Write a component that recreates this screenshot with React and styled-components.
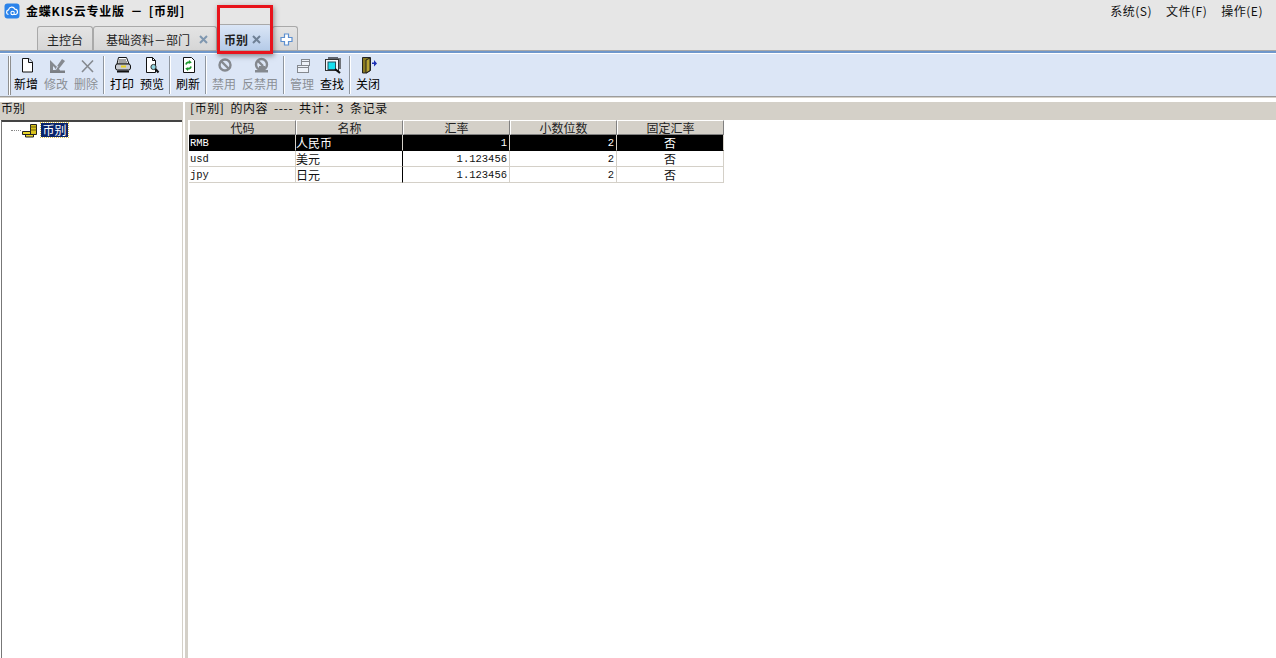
import React from 'react';
import styled, { createGlobalStyle } from 'styled-components';

const Global = createGlobalStyle`
    html, body {
        margin: 0;
        padding: 0;
        height: 100%;
        overflow: hidden;
        background: #fff;
    }
    body {
        font-family: "Noto Sans CJK SC", "Liberation Sans", sans-serif;
        font-size: 12px;
        color: #000;
    }
`;

const Page = styled.div`
    position: relative;
    width: 1276px;
    height: 658px;
    display: flex;
    flex-direction: column;
    overflow: hidden;
`;
const Head = styled.div`
    height: 50px;
    background: #e6e6e6;
    display: flex;
    flex-direction: column;
`;
const TitleRow = styled.div`
    height: 26px;
    display: flex;
    align-items: center;
    padding: 0 6px 5px 4px;
    box-sizing: border-box;
`;
const Title = styled.div`
    margin-left: 6px;
    font-size: 12px;
    font-weight: 700;
    letter-spacing: 0.8px;
    word-spacing: 2px;
    line-height: 16px;
`;
const Menu = styled.div`
    margin-left: auto;
    display: flex;
    gap: 14px;
    padding-right: 7px;
`;
const MenuItem = styled.span`
    font-size: 12px;
    line-height: 16px;
    letter-spacing: 0.5px;
    color: #111;
`;
const TabRow = styled.div`
    height: 24px;
    display: flex;
    padding-left: 37px;
`;
const Tab = styled.div`
    width: ${p => p.$w}px;
    box-sizing: border-box;
    display: flex;
    align-items: center;
    padding: ${p => (p.$active ? 4 : 2)}px 0 0 ${p => p.$pad}px;
    margin-top: ${p => (p.$active ? -2 : 0)}px;
    border: 1px solid #a9a9a9;
    border-bottom: none;
    border-radius: 3px 3px 0 0;
    background: ${p => (p.$active
        ? 'linear-gradient(#dbe6f6, #b5cbe8)'
        : 'linear-gradient(#e4e4e4, #d6d6d6)')};
    font-size: 12px;
    font-weight: ${p => (p.$active ? 700 : 400)};
    line-height: 20px;
    color: #222;
`;
const TabClose = styled.svg`
    margin-left: ${p => p.$gap}px;
    width: 9px;
    height: 9px;
`;
const BlueRule = styled.div`
    height: 4px;
    box-sizing: border-box;
    background: #6f97cb;
    border-top: 1px solid #a8a8a8;
    border-bottom: 1px solid #fff;
`;
const Toolbar = styled.div`
    height: 43px;
    background: #dce6f6;
    display: flex;
    align-items: stretch;
    padding: 2px 0 0 8px;
    box-sizing: border-box;
    border-bottom: 1px solid #9c9c9c;
`;
const Grip = styled.div`
    width: 3px;
    height: 39px;
    box-sizing: border-box;
    border-left: 1px solid #8f8f8f;
    border-right: 1px solid #8f8f8f;
    background: #fff;
`;
const ToolGroup = styled.div`
    display: flex;
`;
const ToolButton = styled.div`
    width: ${p => p.$w || 30}px;
    display: flex;
    flex-direction: column;
    align-items: center;
    color: ${p => (p.$off ? '#8b8f95' : '#000')};
`;
const IconSlot = styled.svg`
    width: 20px;
    height: 20px;
`;
const ToolLabel = styled.div`
    font-size: 12px;
    line-height: 16px;
    white-space: nowrap;
`;
const ToolSep = styled.div`
    width: 2px;
    height: 38px;
    margin: 0 2px;
    background: linear-gradient(90deg, #8f969f 50%, #fff 50%);
`;
const Body = styled.div`
    flex: 1;
    display: flex;
    min-height: 0;
    background: #fff;
    border-top: 1px solid #d4d0c8;
    padding-top: 4px;
`;
const LeftPane = styled.div`
    width: 182px;
    display: flex;
    flex-direction: column;
`;
const PaneTitle = styled.div`
    height: 18px;
    background: #d4d0c8;
    font-size: 12px;
    line-height: 12px;
    padding-left: 1px;
    color: #111;
`;
const Tree = styled.div`
    flex: 1;
    margin-left: 1px;
    border-top: 2px solid #444;
    border-left: 1px solid #777;
    padding-top: 1px;
    display: flex;
    align-items: flex-start;
`;
const TreeDots = styled.div`
    width: 10px;
    margin: 7px 0 0 9px;
    border-top: 1px dotted #888;
`;
const TreeIcon = styled.svg`
    width: 20px;
    height: 16px;
`;
const TreeLabel = styled.div`
    padding: 0 1.5px;
    background: #0a246a;
    color: #fff;
    font-size: 12px;
    line-height: 14px;
    outline: 1px dotted #d9c04f;
`;
const Splitter = styled.div`
    width: 6px;
    box-sizing: border-box;
    border-left: 1px solid #d4d0c8;
    border-right: 1px solid #d4d0c8;
    background: linear-gradient(90deg, #fff 40%, #8a8a8a 40%, #8a8a8a 60%, #d4d0c8 60%);
`;
const RightPane = styled.div`
    flex: 1;
    display: flex;
    flex-direction: column;
    min-width: 0;
`;
const ContentTitle = styled.div`
    height: 18px;
    background: #d4d0c8;
    font-size: 12px;
    line-height: 12px;
    padding-left: 2px;
    letter-spacing: 0.6px;
    word-spacing: 2.6px;
    color: #111;
`;
const Table = styled.table`
    margin-left: 1px;
    border-collapse: separate;
    border-spacing: 0;
    table-layout: fixed;
    width: 535px;
`;
const Th = styled.th`
    height: 15px;
    padding: 0;
    background: #d4d0c8;
    border-top: 1px solid #fff;
    border-left: 1px solid #fff;
    border-right: 1px solid #808080;
    border-bottom: 1px solid #808080;
    box-sizing: border-box;
    font-size: 12px;
    font-weight: 400;
    line-height: 13px;
    color: #222;
`;
const Td = styled.td`
    height: 16px;
    padding: 0 ${p => (p.$align === 'right' ? 2 : 0)}px 0 ${p => (p.$mono ? 1 : 0)}px;
    box-sizing: border-box;
    overflow: hidden;
    white-space: nowrap;
    font-family: ${p => (p.$mono ? '"Liberation Mono", monospace' : 'inherit')};
    font-size: ${p => (p.$mono ? 10.5 : 12)}px;
    line-height: 14px;
    text-align: ${p => p.$align || 'left'};
    color: ${p => (p.$sel ? '#fff' : '#111')};
    background: ${p => (p.$sel ? '#000' : '#fff')};
    border-right: 1px solid ${p => (p.$edge ? '#000' : '#d4d0c8')};
    border-bottom: 1px solid ${p => (p.$sel ? '#000' : '#d4d0c8')};
`;
const RedFrame = styled.div`
    position: absolute;
    left: 217px;
    top: 5px;
    width: 56px;
    height: 49px;
    box-sizing: border-box;
    border: 3px solid #e8141c;
    box-shadow: 1px 2px 5px rgba(60, 60, 60, 0.55);
`;

const Cloud = () => (
    <svg width="16" height="16" viewBox="0 0 16 16">
        <rect x="0.5" y="0.5" width="15" height="15" rx="3" fill="#2b83ea" />
        <path d="M4.5 11.5a2.4 2.4 0 0 1 0-4.7 3.4 3.4 0 0 1 6.4-.6 2.7 2.7 0 0 1 .6 5.3H7" fill="none" stroke="#fff" strokeWidth="1.2" />
        <circle cx="8.6" cy="10" r="1.7" fill="none" stroke="#fff" strokeWidth="1.1" />
    </svg>
);

const CloseX = ({ gap, active }) => (
    <TabClose $gap={gap} viewBox="0 0 9 9">
        <path d="M1 1l7 7M8 1l-7 7" stroke={active ? '#6f8196' : '#7f97b0'} strokeWidth="2" />
    </TabClose>
);

const icons = {
    add: (
        <>
            <path d="M6.500 2.500h6.500l3.500 3.500v10h-10z" fill="#fff" stroke="#111" />
            <path d="M12.500 2.500v4h4" fill="#dce6f6" stroke="#111" />
        </>
    ),
    edit: (
        <>
            <path d="M4 4l10 10v3H4z" fill="#85898f" />
            <path d="M7 10v4h4z" fill="#dce6f6" />
            <path d="M4 14.500h15v2.500H4z" fill="#7b7f84" />
            <path d="M9 13l7-10 3 2-7 9z" fill="#85898f" />
            <path d="M10 13l2-3" stroke="#dce6f6" />
        </>
    ),
    del: <path d="M6 4.500l11 11.500M17 4.500L6 16" stroke="#85898f" strokeWidth="1.600" fill="none" />,
    print: (
        <>
            <path d="M6.500 1.500h8l2.500 6.500H5z" fill="#fff" stroke="#111" />
            <path d="M7 4h7M6.500 6h8.500" stroke="#444" />
            <rect x="3.500" y="8" width="15" height="6" rx="2" fill="#c9ccd2" stroke="#111" />
            <path d="M5 15.500h12" stroke="#111" strokeWidth="2" />
            <path d="M9 10.500h5" stroke="#e8d020" strokeWidth="2" />
        </>
    ),
    preview: (
        <>
            <path d="M4.500 1.500h6l3 3v12h-9z" fill="#fff" stroke="#111" />
            <path d="M10.500 1.500v3h3" fill="none" stroke="#111" />
            <circle cx="11.500" cy="11" r="2.600" fill="#8fd5e0" stroke="#333" />
            <path d="M13.500 13l3 3.500" stroke="#111" strokeWidth="2" />
        </>
    ),
    refresh: (
        <>
            <path d="M5.500 1.500h8l3 3v12h-11z" fill="#fff" stroke="#111" />
            <path d="M8 8.500a2.700 2.700 0 0 1 4.500-1.500M13 10.500a2.700 2.700 0 0 1-4.500 1.500" fill="none" stroke="#1c9a2e" strokeWidth="1.700" />
            <path d="M11 4l2.800 2.500-3.300 1.200zM10 15l-2.800-2.500 3.300-1.200z" fill="#1c9a2e" />
        </>
    ),
    ban: (
        <>
            <circle cx="11" cy="9" r="5.500" fill="none" stroke="#85898f" strokeWidth="2.400" />
            <path d="M7 5l8 8" stroke="#85898f" strokeWidth="2.400" />
        </>
    ),
    unban: (
        <>
            <circle cx="11.500" cy="8.500" r="5.500" fill="none" stroke="#85898f" strokeWidth="2.400" />
            <path d="M8 5l5 5" stroke="#85898f" strokeWidth="2.400" />
            <path d="M5 14h13v2.500H5zM9 10h6v4H9z" fill="#85898f" />
        </>
    ),
    manage: (
        <>
            <rect x="9.500" y="3.500" width="8" height="6" fill="#eef2f9" stroke="#85898f" />
            <rect x="5.500" y="9.500" width="11" height="7" fill="#eef2f9" stroke="#85898f" />
            <path d="M6 11.500h10M10 5.500h7" stroke="#85898f" />
        </>
    ),
    find: (
        <>
            <rect x="6" y="1" width="10" height="3" fill="#5f646d" />
            <path d="M16 2h3v11h-3z" fill="#6f7379" />
            <rect x="3.500" y="3.500" width="13" height="11" fill="#f4f6fa" stroke="#333" />
            <rect x="6" y="6" width="7.500" height="7.500" fill="#18e0ef" stroke="#205060" />
            <path d="M13 13l5 4" stroke="#111" strokeWidth="2.200" />
        </>
    ),
    exit: (
        <>
            <path d="M4.500 1.500h8v13l-4 2.500h-4z" fill="#8a7a20" stroke="#222" />
            <path d="M8 4l4-2v12.500L8 17z" fill="#b7a433" stroke="#222" />
            <path d="M14 6.500h2V4l3 3.500-3 3V8h-2z" fill="#1b2fb5" />
        </>
    ),
};

const groups = [
    [
        { key: 'add', label: '新增' },
        { key: 'edit', label: '修改', off: true },
        { key: 'del', label: '删除', off: true },
    ],
    [
        { key: 'print', label: '打印' },
        { key: 'preview', label: '预览' },
    ],
    [{ key: 'refresh', label: '刷新' }],
    [
        { key: 'ban', label: '禁用', off: true },
        { key: 'unban', label: '反禁用', off: true, w: 42 },
    ],
    [
        { key: 'manage', label: '管理', off: true },
        { key: 'find', label: '查找' },
    ],
    [{ key: 'exit', label: '关闭' }],
];

const columns = ['代码', '名称', '汇率', '小数位数', '固定汇率'];
const rows = [
    { code: 'RMB', name: '人民币', rate: '1', digits: '2', fixed: '否', sel: true },
    { code: 'usd', name: '美元', rate: '1.123456', digits: '2', fixed: '否' },
    { code: 'jpy', name: '日元', rate: '1.123456', digits: '2', fixed: '否' },
];

const App = () => (
    <Page>
        <Global />
        <Head>
            <TitleRow>
                <Cloud />
                <Title>金蝶KIS云专业版 － [币别]</Title>
                <Menu>
                    <MenuItem>系统(S)</MenuItem>
                    <MenuItem>文件(F)</MenuItem>
                    <MenuItem>操作(E)</MenuItem>
                </Menu>
            </TitleRow>
            <TabRow>
                <Tab $w={56} $pad={9}>主控台</Tab>
                <Tab $w={124} $pad={12}>
                    基础资料－部门
                    <CloseX gap={9} />
                </Tab>
                <Tab $w={55} $pad={6} $active>
                    币别
                    <CloseX gap={4} active />
                </Tab>
                <Tab $w={26} $pad={7}>
                    <svg width="13" height="13" viewBox="0 0 13 13">
                        <path d="M4.500 1h4v3.500H12v4H8.500V12h-4V8.500H1v-4h3.500z" fill="#fff" stroke="#5c8fd0" strokeWidth="1.200" />
                    </svg>
                </Tab>
            </TabRow>
        </Head>
        <BlueRule />
        <Toolbar>
            <Grip />
            {groups.map((group, i) => (
                <React.Fragment key={group[0].key}>
                    {i > 0 && <ToolSep />}
                    <ToolGroup>
                        {group.map(b => (
                            <ToolButton key={b.key} $off={b.off} $w={b.w}>
                                <IconSlot viewBox="0 0 20 20">{icons[b.key]}</IconSlot>
                                <ToolLabel>{b.label}</ToolLabel>
                            </ToolButton>
                        ))}
                    </ToolGroup>
                </React.Fragment>
            ))}
        </Toolbar>
        <Body>
            <LeftPane>
                <PaneTitle>币别</PaneTitle>
                <Tree>
                    <TreeDots />
                    <TreeIcon viewBox="0 0 20 16">
                        <path d="M9.500 1.500h6v10h-6z" fill="#d9c21c" stroke="#222" />
                        <path d="M9.500 4h6M9.500 7h6" stroke="#6b5f10" />
                        <path d="M1.500 8.500h8v3h-8zM4.500 11.500h8v2.500h-8z" fill="#e8d52a" stroke="#222" />
                    </TreeIcon>
                    <TreeLabel>币别</TreeLabel>
                </Tree>
            </LeftPane>
            <Splitter />
            <RightPane>
                <ContentTitle>[币别] 的内容 ---- 共计：3 条记录</ContentTitle>
                <Table>
                    <thead>
                        <tr>
                            {columns.map(c => <Th key={c}>{c}</Th>)}
                        </tr>
                    </thead>
                    <tbody>
                        {rows.map(r => (
                            <tr key={r.code}>
                                <Td $sel={r.sel} $mono>{r.code}</Td>
                                <Td $sel={r.sel} $edge={!r.sel}>{r.name}</Td>
                                <Td $sel={r.sel} $mono $align="right">{r.rate}</Td>
                                <Td $sel={r.sel} $mono $align="right">{r.digits}</Td>
                                <Td $sel={r.sel} $align="center">{r.fixed}</Td>
                            </tr>
                        ))}
                    </tbody>
                </Table>
            </RightPane>
        </Body>
        <RedFrame />
    </Page>
);

export default App;
